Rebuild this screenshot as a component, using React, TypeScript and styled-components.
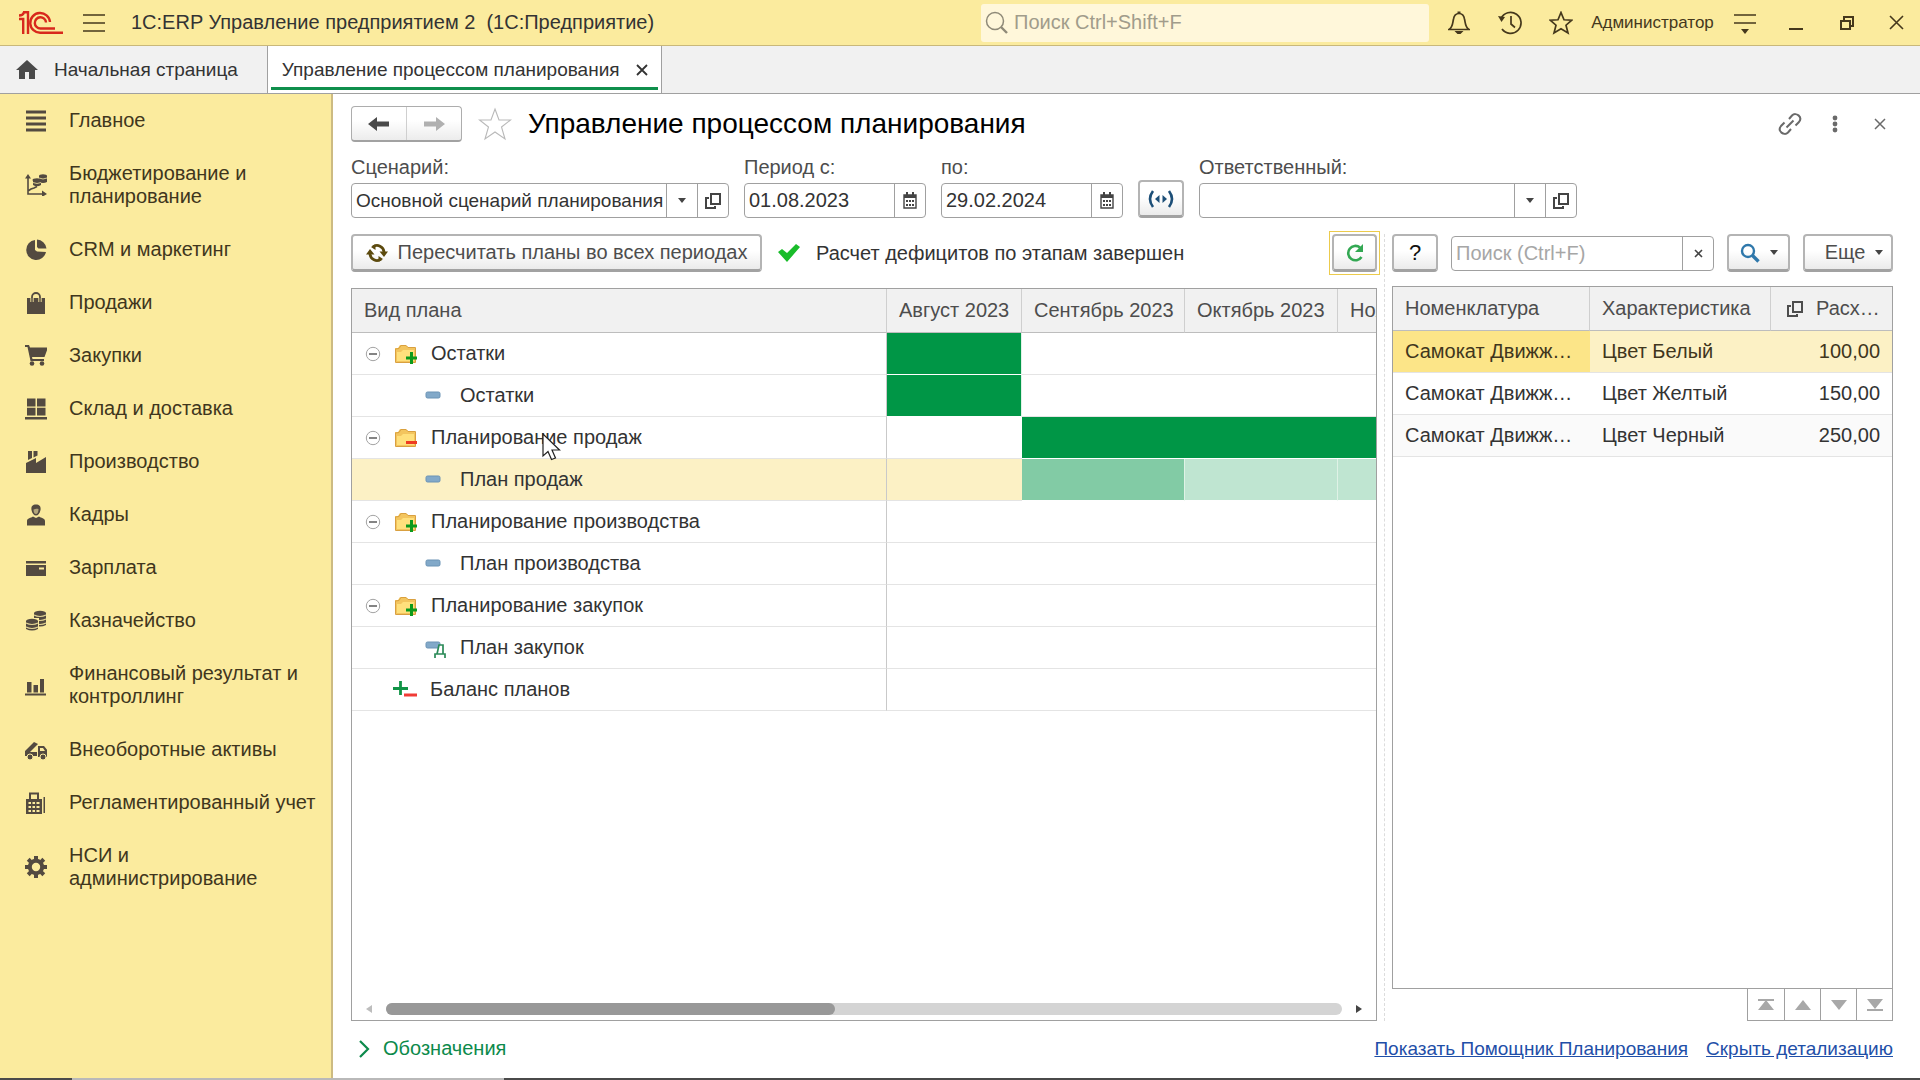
import React from "react";
import styled, { createGlobalStyle, css } from "styled-components";

const c = {
  yellow: "#fbeb9e",
  yellowLine: "#c9b87a",
  grey: "#f1f1f1",
  line: "#a0a0a0",
  rowLine: "#e4e4e4",
  text: "#333333",
  label: "#4d4d4d",
  green: "#009646",
  link: "#1f4fa8",
  select: "#fcf1c5",
  selectStrong: "#fce588",
};

const GlobalStyle = createGlobalStyle`
  *, *::before, *::after { box-sizing: border-box; }
  body { margin: 0; background: #fff; }
  body, button, input, select {
    font-family: "Liberation Sans", Arial, sans-serif;
    font-size: 20px;
    line-height: 23px;
    color: ${c.text};
  }
  button { padding: 0; margin: 0; border: 0; background: none; cursor: pointer; }
  a { color: inherit; }
  svg { display: block; flex: none; }
`;

/* ---------- frame ---------- */

const Page = styled.div`
  display: flex;
  flex-direction: column;
  min-height: 100vh;
`;

const TopBar = styled.header`
  display: flex;
  align-items: center;
  height: 46px;
  padding-left: 19px;
  background: ${c.yellow};
  border-bottom: 1px solid ${c.yellowLine};
`;

const MenuButton = styled.button`
  margin: 0 26px 0 20px;
`;

const AppTitle = styled.div`
  flex: 1;
  white-space: pre;
`;

const GlobalSearch = styled.label`
  display: flex;
  align-items: center;
  gap: 6px;
  width: 448px;
  height: 38px;
  margin-right: 4px;
  padding-left: 4px;
  border-radius: 3px;
  background: #fff7da;
  color: #8f8a78;
  input {
    flex: 1;
    min-width: 0;
    padding: 0;
    border: 0;
    outline: 0;
    background: none;
  }
  input::placeholder { color: #a19c8b; opacity: 1; }
`;

const TopButton = styled.button<{ $wide?: boolean }>`
  display: flex;
  align-items: center;
  justify-content: center;
  width: ${(p) => (p.$wide ? 133 : 51)}px;
  height: 44px;
  font-size: 17px;
  color: #45381c;
  &:last-child { width: 48px; }
`;

const TabBar = styled.nav`
  display: flex;
  height: 48px;
  background: ${c.grey};
  border-bottom: 1px solid ${c.line};
  font-size: 19px;
`;

const Tab = styled.div<{ $active?: boolean }>`
  position: relative;
  display: flex;
  align-items: center;
  gap: 16px;
  padding: 0 13px 0 14px;
  border-right: 1px solid ${c.line};
  ${(p) =>
    p.$active
      ? css`
          background: #fff;
          &::after {
            content: "";
            position: absolute;
            left: 3px;
            right: 3px;
            bottom: 3px;
            height: 3px;
            background: #0f8f4c;
          }
        `
      : css`
          padding: 0 29px 0 16px;
        `}
`;

const Body = styled.div`
  display: flex;
  flex: 1;
`;

const Sidebar = styled.nav`
  flex: none;
  width: 333px;
  background: ${c.yellow};
  border-right: 2px solid #cdbb82;
`;

const Section = styled.a`
  display: flex;
  align-items: center;
  gap: 22px;
  padding: 15px 12px 15px 25px;
  color: #40361d;
  text-decoration: none;
  svg { color: #534a40; }
`;

const Main = styled.main`
  display: flex;
  flex: 1;
  flex-direction: column;
  min-width: 0;
  padding-top: 12px;
`;

const TitleRow = styled.div`
  display: flex;
  align-items: center;
  height: 36px;
  padding: 0 18px;
`;

const NavPair = styled.div`
  display: flex;
  width: 111px;
  height: 36px;
  margin-right: 16px;
  border: 1px solid #adadad;
  border-bottom: 2px solid #a2a2a2;
  border-radius: 4px;
  background: linear-gradient(#fff 40%, #ececec);
  button {
    flex: 1;
    display: flex;
    align-items: center;
    justify-content: center;
  }
  button + button { border-left: 1px solid #cfcfcf; }
`;

const Title = styled.h1`
  flex: 1;
  margin: 0 0 0 16px;
  font-size: 28px;
  line-height: 32px;
  font-weight: 400;
  color: #000;
`;

const TitleButton = styled.button`
  display: flex;
  align-items: center;
  justify-content: center;
  width: 45px;
  height: 36px;
  color: #6a6a6a;
`;

/* ---------- form controls ---------- */

const Filters = styled.div`
  display: flex;
  align-items: flex-end;
  padding: 14px 27px 0 18px;
`;

const Group = styled.div<{ $w: number; $gap?: number }>`
  display: flex;
  flex-direction: column;
  gap: 4px;
  width: ${(p) => p.$w}px;
  margin-right: ${(p) => p.$gap ?? 15}px;
  label { color: ${c.label}; }
`;

const Field = styled.div`
  position: relative;
  display: flex;
  height: 35px;
  border: 1px solid ${c.line};
  border-radius: 4px;
  background: #fff;
  input, select {
    flex: 1;
    min-width: 0;
    height: 33px;
    margin: 0;
    padding: 0 4px;
    border: 0;
    outline: 0;
    background: none;
    appearance: none;
  }
  input::placeholder { color: #a6a6a6; opacity: 1; }
  select { padding-right: 32px; font-size: 19px; }
`;

const SelectArrow = styled.span`
  position: absolute;
  top: 0;
  right: 31px;
  bottom: 0;
  display: flex;
  align-items: center;
  justify-content: center;
  width: 31px;
  border-left: 1px solid ${c.line};
  background: #fff;
  pointer-events: none;
`;

const FieldButton = styled.button`
  display: flex;
  align-items: center;
  justify-content: center;
  width: 31px;
  border-left: 1px solid ${c.line};
  color: #444;
`;

const Button = styled.button<{ $w: number }>`
  display: flex;
  align-items: center;
  justify-content: center;
  gap: 10px;
  flex: none;
  width: ${(p) => p.$w}px;
  height: 38px;
  border: 2px solid #b4b4b4;
  border-bottom: 3px solid #a2a2a2;
  border-radius: 4px;
  background: linear-gradient(#fff 45%, #ebebeb);
  color: ${c.label};
`;

const FocusFrame = styled.div`
  margin: -3px;
  padding: 2px;
  border: 1px solid #eccb4c;
`;

const PeriodButton = styled(Button)`
  margin-right: 15px;
`;

const HelpButton = styled(Button)`
  color: #111;
  font-size: 22px;
`;

const MoreButton = styled(Button)`
  padding-left: 12px;
`;

/* ---------- panes ---------- */

const Panes = styled.div`
  display: flex;
  flex: 1;
  padding: 16px 27px 0 18px;
`;

const PlanPane = styled.section`
  display: flex;
  flex: 1;
  flex-direction: column;
  gap: 16px;
  min-width: 0;
`;

const Splitter = styled.div`
  width: 15px;
  flex: none;
  padding-left: 7px;
  &::before {
    content: "";
    display: block;
    height: 100%;
    border-left: 1px dashed #dcdcdc;
  }
`;

const DetailPane = styled.section`
  display: flex;
  flex: none;
  flex-direction: column;
  width: 501px;
`;

const Toolbar = styled.div`
  display: flex;
  align-items: center;
  height: 38px;
`;

const DetailToolbar = styled(Toolbar)`
  justify-content: space-between;
  margin-bottom: 14px;
  ${Field} { width: 263px; }
`;

const Status = styled.div`
  display: flex;
  flex: 1;
  align-items: center;
  gap: 16px;
  margin-left: 16px;
`;

const PlanFrame = styled.div`
  position: relative;
  display: flex;
  flex: 1;
  flex-direction: column;
  justify-content: space-between;
  border: 1px solid ${c.line};
`;

const PlanTable = styled.table`
  width: 100%;
  table-layout: fixed;
  border-collapse: separate;
  border-spacing: 0;
  th {
    height: 44px;
    padding: 0 0 0 12px;
    overflow: hidden;
    border-right: 1px solid #cfcfcf;
    border-bottom: 1px solid #bdbdbd;
    background: ${c.grey};
    color: ${c.label};
    font-weight: 400;
    text-align: left;
    white-space: nowrap;
  }
  th:last-child { border-right: 0; }
`;

const NameCell = styled.td`
  height: 42px;
  padding: 0;
  border-right: 1px solid #c9c9c9;
  border-bottom: 1px solid ${c.rowLine};
`;

const PlanRow = styled.tr<{ $selected?: boolean }>`
  background: ${(p) => (p.$selected ? c.select : "#fff")};
`;

const Name = styled.div<{ $child?: boolean }>`
  display: grid;
  grid-template-columns: ${(p) => (p.$child ? "22px" : "24px")} auto;
  align-items: center;
  gap: 13px;
  padding-left: ${(p) => (p.$child ? 73 : 41)}px;
`;

const ParentName = styled(Name)`
  grid-template-columns: 16px 24px auto;
  padding-left: 13px;
`;

const TreeToggle = styled.button`
  height: 16px;
`;

const MonthCell = styled.td<{ $fill?: string; $merge?: boolean }>`
  padding: 0;
  background: ${(p) => p.$fill ?? "transparent"};
  border-bottom: 1px solid ${(p) => (p.$fill ? "#fff" : c.rowLine)};
  border-right: ${(p) => (p.$fill && !p.$merge ? "1px solid #dff2e6" : "0")};
  &:last-child { border-right: 0; }
`;

const ScrollBar = styled.div`
  display: flex;
  align-items: center;
  justify-content: space-between;
  gap: 14px;
  padding: 0 14px 5px;
`;

const Track = styled.div`
  flex: 1;
  height: 12px;
  border-radius: 6px;
  background: #d4d4d4;
  &::before {
    content: "";
    display: block;
    width: 47%;
    height: 12px;
    border-radius: 6px;
    background: #989898;
  }
`;

const Pointer = styled.svg`
  position: absolute;
  left: 190px;
  top: 144px;
`;

const DetailFrame = styled.div`
  flex: 1;
  border: 1px solid ${c.line};
`;

const DetailTable = styled.table`
  width: 100%;
  table-layout: fixed;
  border-collapse: separate;
  border-spacing: 0;
  th, td {
    height: 42px;
    padding: 0 12px;
    overflow: hidden;
    border-bottom: 1px solid ${c.rowLine};
    text-align: left;
    text-overflow: ellipsis;
    white-space: nowrap;
  }
  th {
    height: 44px;
    border-right: 1px solid #cfcfcf;
    border-bottom-color: #bdbdbd;
    background: ${c.grey};
    color: ${c.label};
    font-weight: 400;
  }
  th:last-child { border-right: 0; }
  td:last-child { text-align: right; }
  tr:nth-child(3) td { background: #fafafa; }
`;

const DetailRow = styled.tr<{ $selected?: boolean }>`
  ${(p) => p.$selected && css`
    td { background: ${c.select}; color: #40361d; }
    td:first-child { background: ${c.selectStrong}; }
  `}
`;

const HeadWithIcon = styled.div`
  display: flex;
  align-items: center;
  gap: 13px;
  padding-left: 4px;
`;

const Pager = styled.div`
  display: flex;
  align-self: flex-end;
  height: 32px;
  border: 1px solid ${c.line};
  border-top: 0;
  button {
    display: flex;
    align-items: center;
    justify-content: center;
    width: 36px;
    color: #a8a8a8;
  }
  button + button { border-left: 1px solid ${c.line}; }
`;

const Footer = styled.footer`
  display: flex;
  align-items: center;
  gap: 18px;
  height: 57px;
  padding: 0 27px 2px 18px;
  font-size: 19px;
  a { color: ${c.link}; }
`;

const Legend = styled.button`
  display: flex;
  align-items: center;
  gap: 13px;
  margin: 0 auto 0 7px;
  color: #0c8a4b;
`;

const ScreenEdge = styled.div`
  height: 2px;
  background: linear-gradient(90deg, #4a4a4a 72px, #b9b9b9 72px 504px, #4a4a4a 504px);
`;

/* ---------- icons ---------- */

type Draw = { w: number; h?: number; children: React.ReactNode };
const Icon = ({ w, h = w, children }: Draw) => (
  <svg width={w} height={h} viewBox={`0 0 ${w} ${h}`} fill="currentColor" aria-hidden="true">
    {children}
  </svg>
);
const Line = ({ d, s = 1.5, color = "currentColor" }: { d: string; s?: number; color?: string }) => (
  <path d={d} fill="none" stroke={color} strokeWidth={s} />
);

const Logo = () => (
  <Icon w={44} h={24}>
    <g fill="none" stroke="#d8281c" strokeWidth="2.4">
      <path d="M0 8H4.200V23M0 4.500C3 4.500 4.500 3 5 1.300H9V23" />
      <path d="M31 11A9.900 9.900 0 1 0 21.500 21.800H44" />
      <path d="M27 11.500A5.600 5.600 0 1 0 21.500 17.500H36" />
    </g>
  </Icon>
);

const Caret = ({ color = "#444" }: { color?: string }) => (
  <Icon w={8} h={5}><path d="M0 0H8L4 5Z" fill={color} /></Icon>
);
const OpenIcon = () => (
  <Icon w={16} h={16}><Line s={2} d="M6 1H15V11H6ZM4 5H1V15H10V13" /></Icon>
);
const CalendarIcon = () => (
  <Icon w={14} h={17}>
    <Line s={1.4} d="M1 3H13V16H1Z" />
    <path d="M1 3H13V6H1ZM3 0H5V4H3ZM9 0H11V4H9ZM3 8H5V10H3ZM6 8H8V10H6ZM9 8H11V10H9ZM3 12H5V14H3ZM6 12H8V14H6ZM9 12H11V14H9Z" />
  </Icon>
);
const Cross = ({ size, s = 1.5 }: { size: number; s?: number }) => (
  <Icon w={size}><Line s={s} d={`M1 1L${size - 1} ${size - 1}M${size - 1} 1L1 ${size - 1}`} /></Icon>
);
const Coins = ({ x, y, n }: { x: number; y: number; n: number }) => (
  <g>
    <path d={`M${x} ${y}V${y + n * 4}Q${x + 6} ${y + n * 4 + 3} ${x + 12} ${y + n * 4}V${y}Z`} />
    <ellipse cx={x + 6} cy={y} rx="6" ry="2.200" />
    {Array.from({ length: n }, (_, i) => (
      <path
        key={i}
        d={`M${x} ${y + 2 + i * 4}Q${x + 6} ${y + 5 + i * 4} ${x + 12} ${y + 2 + i * 4}`}
        fill="none"
        stroke="#e3d593"
        strokeWidth="1.2"
      />
    ))}
  </g>
);

const sectionIcons: Record<string, React.ReactNode> = {
  main: <path d="M1 0.500H21V3.500H1ZM1 6.500H21V9.500H1ZM1 12.500H21V15.500H1ZM1 18.500H21V21.500H1Z" />,
  budget: (
    <>
      <Line d="M3 3V20H19M3 17L6 15L9 14L12 12.500" s={1.6} />
      <path d="M0 4.500L3 0L6 4.500ZM17 16.500L22 20L17 23Z" />
      <path d="M14 2V8Q18 10 22 8V2Z" /><ellipse cx="18" cy="2" rx="4" ry="1.700" />
      <path d="M8 6V11Q12 13.500 16 11V6Z" /><ellipse cx="12" cy="6" rx="4.500" ry="1.800" />
      <Line d="M14 4Q18 6 22 4M8 8.500Q12 10.500 16 8.500" s={0.9} color="#e3d593" />
    </>
  ),
  crm: <path d="M10 1A10 10 0 1 0 21 13L12 12.500L10 11ZM12 0.500A10.500 10.500 0 0 1 21.500 9.500L13.500 9.500L12 8Z" />,
  sales: (
    <>
      <path d="M2 6H20V22H2Z" />
      <Line d="M7 11V5A4 4 0 0 1 15 5V11" s={1.8} />
      <Line d="M5.800 6V10M8.200 6V10M13.800 6V10M16.200 6V10" s={0.9} color={c.yellow} />
    </>
  ),
  cart: (
    <>
      <path d="M0 0H4L5 2.500H23L19.500 12H7L7.500 14H19V16H5.500L2.500 2H0Z" />
      <circle cx="7" cy="18.500" r="2.300" /><circle cx="17" cy="18.500" r="2.300" />
    </>
  ),
  stock: <path d="M2 0.500H10.500V8.500H2ZM12 0.500H20.500V8.500H12ZM2 9.800H10.500V17.500H2ZM12 9.800H20.500V17.500H12ZM0 19H22V21.500H0Z" />,
  factory: <path d="M1 22V12L11 7V12L21 6V22ZM3 0H7V7L3 9ZM8.500 0H12.500V4.500L8.500 6.500Z" />,
  person: (
    <>
      <path d="M11 0.500C15 0.500 16 3 15.500 6C15 9.500 13 11.500 11 11.500S7 9.500 6.500 6C6 3 7 0.500 11 0.500ZM2 21.500V17C2 14 6 14 8 12.500L11 14L14 12.500C16 14 20 14 20 17V21.500Z" />
      <path d="M8.500 5.500C11 4.500 12 4.500 13.500 5C13.500 8 12.500 10 11 10S8.500 8.500 8.500 5.500Z" fill="#b3a67a" />
    </>
  ),
  card: <path d="M1 4H21V6.500H1ZM1 8H21V19H1ZM14 10.500V12.500H19V10.500Z" fillRule="evenodd" />,
  coins: <><Coins x={9} y={3} n={3} /><rect x="0" y="8" width="14" height="14" fill={c.yellow} /><Coins x={1} y={11} n={2} /></>,
  bars: <path d="M0 19.500H21V21.500H0ZM2 8H6.500V18.500H2ZM8.500 11H13V18.500H8.500ZM15 5H19V18.500H15Z" />,
  truck: (
    <>
      <path d="M0 12L9 3L13 5L5 13H12V17H0ZM13 7H19L23 12V18H13ZM15 9V12H20L18 9Z" fillRule="evenodd" />
      <circle cx="5" cy="18" r="3" stroke={c.yellow} /><circle cx="18" cy="18" r="3" stroke={c.yellow} />
    </>
  ),
  calc: (
    <path d="M4 0.500H14V7H17V22H1V7H4ZM18.500 5H20V21H18.500ZM6 2.500V7H12V2.500ZM3.500 10V12H6V10ZM7.500 10V12H10V10ZM11.500 10V12H14.500V10ZM3.500 14V16H6V14ZM7.500 14V16H10V14ZM11.500 14V16H14.500V14ZM3.500 18V20H6V18ZM7.500 18V20H10V18ZM11.500 18V20H14.500V18Z" fillRule="evenodd" />
  ),
  gear: (
    <>
      <circle cx="11" cy="11" r="6.200" fill="none" stroke="currentColor" strokeWidth="4" />
      {[0, 45, 90, 135, 180, 225, 270, 315].map((a) => (
        <rect key={a} x="9" y="0" width="4" height="4" transform={`rotate(${a} 11 11)`} />
      ))}
    </>
  ),
};

const Folder = ({ minus }: { minus?: boolean }) => (
  <Icon w={24} h={20}>
    <path d="M1 4L4 4L6 1H12L14 3H21V18H1Z" fill="#f3c55e" />
    <path d="M3 8H7L9 6H20V17H3Z" fill="#ffe07c" />
    <Line d="M1.500 18.500V5L5 4.500L7 1.500H12L14 3.500H21.500V18.500Z" s={1} color="#d9a040" />
    <Line d={minus ? "M12 14.500H23" : "M17.500 8V20M12 14H23"} s={3} color={minus ? "#ee3b22" : "#0c9a1c"} />
  </Icon>
);
const Dash = () => (
  <rect x="1" y="5" width="14" height="6" rx="1.500" fill="#82a9c9" stroke="#6b93b5" strokeWidth="1" />
);
const PlanIcon = () => <Icon w={22} h={18}><Dash /></Icon>;
const PurchaseIcon = () => (
  <Icon w={22} h={22}>
    <Dash />
    <path d="M10 21V17H20V21M12 17L14 8H18V17" fill="#fff" stroke="#2b8a58" strokeWidth="1.700" />
  </Icon>
);
const BalanceIcon = () => (
  <Icon w={24} h={20}>
    <Line d="M7.500 1V15M0 8.500H15" s={2.8} color="#119447" />
    <Line d="M11 15H24" s={3} color="#f03b36" />
  </Icon>
);
const ToggleIcon = () => (
  <Icon w={16}>
    <circle cx="8" cy="8" r="6.700" fill="#fff" stroke="#a3a3a3" />
    <Line d="M4 8H12" s={1.6} color="#666" />
  </Icon>
);

/* ---------- data ---------- */

const sections: [string, string][] = [
  ["main", "Главное"],
  ["budget", "Бюджетирование и планирование"],
  ["crm", "CRM и маркетинг"],
  ["sales", "Продажи"],
  ["cart", "Закупки"],
  ["stock", "Склад и доставка"],
  ["factory", "Производство"],
  ["person", "Кадры"],
  ["card", "Зарплата"],
  ["coins", "Казначейство"],
  ["bars", "Финансовый результат и контроллинг"],
  ["truck", "Внеоборотные активы"],
  ["calc", "Регламентированный учет"],
  ["gear", "НСИ и администрирование"],
];

type Kind = "plus" | "minus" | "plan" | "purchase" | "balance";
const G = c.green;
const plans: { kind: Kind; name: string; fills?: (string | undefined)[]; merge?: boolean; selected?: boolean }[] = [
  { kind: "plus", name: "Остатки", fills: [G] },
  { kind: "plan", name: "Остатки", fills: [G] },
  { kind: "minus", name: "Планирование продаж", fills: [undefined, G, G, G], merge: true },
  { kind: "plan", name: "План продаж", fills: [undefined, "#82cba5", "#bfe5d1", "#bfe5d1"], selected: true },
  { kind: "plus", name: "Планирование производства" },
  { kind: "plan", name: "План производства" },
  { kind: "plus", name: "Планирование закупок" },
  { kind: "purchase", name: "План закупок" },
  { kind: "balance", name: "Баланс планов" },
];
const months = ["Август 2023", "Сентябрь 2023", "Октябрь 2023", "Ноя"];
const details = [
  ["Самокат Движж…", "Цвет Белый", "100,00"],
  ["Самокат Движж…", "Цвет Желтый", "150,00"],
  ["Самокат Движж…", "Цвет Черный", "250,00"],
];

const PlanName = ({ kind, name }: { kind: Kind; name: string }) => {
  if (kind === "plus" || kind === "minus")
    return (
      <ParentName>
        <TreeToggle aria-label="Свернуть"><ToggleIcon /></TreeToggle>
        <Folder minus={kind === "minus"} />
        {name}
      </ParentName>
    );
  if (kind === "balance") return <Name><BalanceIcon />{name}</Name>;
  return <Name $child>{kind === "plan" ? <PlanIcon /> : <PurchaseIcon />}{name}</Name>;
};

export default function App() {
  return (
    <Page>
      <GlobalStyle />
      <TopBar>
        <Logo />
        <MenuButton aria-label="Меню">
          <Icon w={22} h={18}><Line d="M0 1H22M0 9H22M0 17H22" color="#45381c" /></Icon>
        </MenuButton>
        <AppTitle>{"1С:ERP Управление предприятием 2  (1С:Предприятие)"}</AppTitle>
        <GlobalSearch>
          <Icon w={23} h={23}><circle cx="10" cy="10" r="8.500" fill="none" stroke="currentColor" strokeWidth="1.500" /><Line d="M16 16L22 22" s={2.4} /></Icon>
          <input aria-label="Поиск" placeholder="Поиск Ctrl+Shift+F" />
        </GlobalSearch>
        <TopButton aria-label="Оповещения">
          <Icon w={22} h={24}><Line d="M1 18.500C5 16 4.500 12 5.500 8C6 5 8 2.500 11 2.500S16 5 16.500 8C17.500 12 17 16 21 18.500Z" s={1.7} /><path d="M9.500 0.500H12.500V3H9.500ZM6.500 20H15.500L12.500 23H9.500Z" /></Icon>
        </TopButton>
        <TopButton aria-label="История">
          <Icon w={24} h={24}><Line d="M3 7.500A10.500 10.500 0 1 1 4 18M13 5V13L17 16.500" s={1.7} /><path d="M0 5L7 6L3.500 11Z" /></Icon>
        </TopButton>
        <TopButton aria-label="Избранное">
          <Icon w={24} h={24}><Line d="M12 1.500L15 8.800L22.800 9.200L17 14.200L19 22L12 17.800L5 22L7 14.200L1.200 9.200L9 8.800Z" s={1.7} /></Icon>
        </TopButton>
        <TopButton $wide>Администратор</TopButton>
        <TopButton aria-label="Настройки">
          <Icon w={22} h={22}><Line d="M0 3H22M0 11H22" s={1.7} /><path d="M7 17H15L11 22Z" /></Icon>
        </TopButton>
        <TopButton aria-label="Свернуть"><Icon w={14} h={14}><Line d="M0 13H14" s={2} /></Icon></TopButton>
        <TopButton aria-label="Восстановить"><Icon w={14} h={14}><Line d="M1 5H10V13H1ZM4 4V1H13V10H11" s={2} /></Icon></TopButton>
        <TopButton aria-label="Закрыть"><Cross size={15} s={1.6} /></TopButton>
      </TopBar>

      <TabBar>
        <Tab>
          <Icon w={22} h={19}><path d="M11 0L22 10H19V19H13V12H9V19H3V10H0Z" fill="#4a4a4a" /></Icon>
          Начальная страница
        </Tab>
        <Tab $active>
          Управление процессом планирования
          <button aria-label="Закрыть вкладку"><Cross size={12} s={1.8} /></button>
        </Tab>
      </TabBar>

      <Body>
        <Sidebar>
          {sections.map(([icon, name]) => (
            <Section key={name} href="#">
              <Icon w={22}>{sectionIcons[icon]}</Icon>
              {name}
            </Section>
          ))}
        </Sidebar>

        <Main>
          <TitleRow>
            <NavPair>
              <button aria-label="Назад"><Icon w={22} h={14}><path d="M0 7L9 0V4.500H21V9.500H9V14Z" fill="#4a4a4a" /></Icon></button>
              <button aria-label="Вперед"><Icon w={22} h={14}><path d="M22 7L13 0V4.500H1V9.500H13V14Z" fill="#b0b0b0" /></Icon></button>
            </NavPair>
            <Icon w={34} h={34}><Line d="M17 2L21 13H32.500L23.500 20L27 32L17 25L7 32L10.500 20L1.500 13H13Z" s={1.1} color="#b9b9b9" /></Icon>
            <Title>Управление процессом планирования</Title>
            <TitleButton aria-label="Ссылка">
              <Icon w={24} h={24}><Line d="M11 7L14 3.500C18 -0.500 25 5 21 10L17.500 13.500M13 17L10 20.500C6 24.500 -1 19 3 14L6.500 10.500M8.500 15.500L15.500 8.500" s={2} /></Icon>
            </TitleButton>
            <TitleButton aria-label="Действия">
              <Icon w={6} h={18}><circle cx="3" cy="3" r="2.400" /><circle cx="3" cy="9" r="2.400" /><circle cx="3" cy="15" r="2.400" /></Icon>
            </TitleButton>
            <TitleButton aria-label="Закрыть"><Cross size={12} /></TitleButton>
          </TitleRow>

          <Filters>
            <Group $w={378}>
              <label htmlFor="scenario">Сценарий:</label>
              <Field>
                <select id="scenario"><option>Основной сценарий планирования</option></select>
                <SelectArrow><Caret /></SelectArrow>
                <FieldButton aria-label="Открыть"><OpenIcon /></FieldButton>
              </Field>
            </Group>
            <Group $w={182}>
              <label htmlFor="from">Период с:</label>
              <Field>
                <input id="from" defaultValue="01.08.2023" />
                <FieldButton aria-label="Календарь"><CalendarIcon /></FieldButton>
              </Field>
            </Group>
            <Group $w={182}>
              <label htmlFor="to">по:</label>
              <Field>
                <input id="to" defaultValue="29.02.2024" />
                <FieldButton aria-label="Календарь"><CalendarIcon /></FieldButton>
              </Field>
            </Group>
            <PeriodButton $w={46} aria-label="Выбрать период">
              <Icon w={26} h={18}>
                <g color="#1d4f78"><Line d="M5 1Q-1 9 5 17M21 1Q27 9 21 17" s={2.6} /></g>
                <path d="M11.500 5V13L7 9ZM14.500 5V13L19 9Z" fill="#1d4f78" />
              </Icon>
            </PeriodButton>
            <Group $w={378} $gap={0}>
              <label htmlFor="owner">Ответственный:</label>
              <Field>
                <select id="owner" defaultValue=""><option value="" /></select>
                <SelectArrow><Caret /></SelectArrow>
                <FieldButton aria-label="Открыть"><OpenIcon /></FieldButton>
              </Field>
            </Group>
          </Filters>

          <Panes>
            <PlanPane>
              <Toolbar>
                <Button $w={411}>
                  <Icon w={22} h={18}>
                    <Line d="M7 2.800A7 7 0 0 1 18 8M15 15.200A7 7 0 0 1 4 10" s={2.8} color="#5c4a0e" />
                    <path d="M13.500 7.500H22L18 13ZM0 10.500H8.500L4 5ZM9.500 0L5 3L9.500 6ZM12.500 12V18L17 15Z" fill="#5c4a0e" />
                  </Icon>
                  Пересчитать планы во всех периодах
                </Button>
                <Status>
                  <Icon w={22} h={18}><path d="M0 8L4 5L9 9L18 0L22 3L9 18Z" fill="#19bc2a" /></Icon>
                  Расчет дефицитов по этапам завершен
                </Status>
                <FocusFrame>
                  <Button $w={45} aria-label="Обновить">
                    <Icon w={20} h={20}><Line d="M16.500 14A7.200 7.200 0 1 1 15 4.500" s={2.6} color="#33a853" /><path d="M18 1V9H10Z" fill="#33a853" /></Icon>
                  </Button>
                </FocusFrame>
              </Toolbar>
              <PlanFrame>
                <PlanTable>
                  <colgroup><col width="535" /><col width="135" /><col width="163" /><col width="153" /><col /></colgroup>
                  <thead>
                    <tr><th>Вид плана</th>{months.map((m) => <th key={m}>{m}</th>)}</tr>
                  </thead>
                  <tbody>
                    {plans.map((p, i) => (
                      <PlanRow key={i} $selected={p.selected}>
                        <NameCell><PlanName kind={p.kind} name={p.name} /></NameCell>
                        {months.map((m, j) => <MonthCell key={m} $fill={p.fills?.[j]} $merge={p.merge} />)}
                      </PlanRow>
                    ))}
                  </tbody>
                </PlanTable>
                <ScrollBar>
                  <Icon w={6} h={8}><path d="M6 0V8L0 4Z" fill="#bdbdbd" /></Icon>
                  <Track />
                  <Icon w={6} h={8}><path d="M0 0V8L6 4Z" fill="#444" /></Icon>
                </ScrollBar>
                <Pointer width="19" height="28" viewBox="0 0 19 28" aria-hidden="true">
                  <path d="M1 1V23L6 18.500L9.500 26.500L13.500 25L10 17H17.500Z" fill="#fff" stroke="#222" strokeWidth="1.200" />
                </Pointer>
              </PlanFrame>
            </PlanPane>

            <Splitter />

            <DetailPane>
              <DetailToolbar>
                <HelpButton $w={46} aria-label="Справка">?</HelpButton>
                <Field>
                  <input aria-label="Поиск в списке" placeholder="Поиск (Ctrl+F)" />
                  <FieldButton aria-label="Очистить"><Cross size={9} s={1.6} /></FieldButton>
                </Field>
                <Button $w={63} aria-label="Найти">
                  <Icon w={20} h={20}><circle cx="8" cy="8" r="6" fill="none" stroke="#2f78ab" strokeWidth="2.400" /><Line d="M12.500 12.500L18.500 18.500" s={3.4} color="#2f78ab" /></Icon>
                  <Caret />
                </Button>
                <MoreButton $w={90}>Еще <Caret /></MoreButton>
              </DetailToolbar>
              <DetailFrame>
                <DetailTable>
                  <colgroup><col width="197" /><col width="181" /><col /></colgroup>
                  <thead>
                    <tr>
                      <th>Номенклатура</th>
                      <th>Характеристика</th>
                      <th><HeadWithIcon><OpenIcon /><span>Расх…</span></HeadWithIcon></th>
                    </tr>
                  </thead>
                  <tbody>
                    {details.map((row, i) => (
                      <DetailRow key={row[1]} $selected={i === 0}>
                        {row.map((v) => <td key={v}>{v}</td>)}
                      </DetailRow>
                    ))}
                  </tbody>
                </DetailTable>
              </DetailFrame>
              <Pager>
                <button aria-label="В начало"><Icon w={16} h={12}><path d="M0 0H16V2H0ZM8 1L16 11H0Z" /></Icon></button>
                <button aria-label="Выше"><Icon w={16} h={10}><path d="M8 0L16 10H0Z" /></Icon></button>
                <button aria-label="Ниже"><Icon w={16} h={10}><path d="M0 0H16L8 10Z" /></Icon></button>
                <button aria-label="В конец"><Icon w={16} h={12}><path d="M0 0H16L8 10ZM0 10H16V12H0Z" /></Icon></button>
              </Pager>
            </DetailPane>
          </Panes>

          <Footer>
            <Legend>
              <Icon w={12} h={18}><Line d="M2 1L10 9L2 17" s={2.2} /></Icon>
              Обозначения
            </Legend>
            <a href="#">Показать Помощник Планирования</a>
            <a href="#">Скрыть детализацию</a>
          </Footer>
        </Main>
      </Body>
      <ScreenEdge />
    </Page>
  );
}
